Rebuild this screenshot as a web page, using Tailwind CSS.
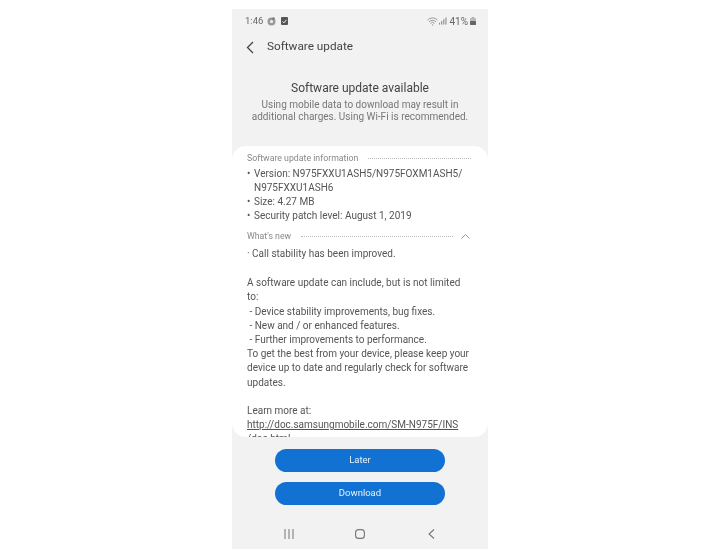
<!DOCTYPE html>
<html lang="en">
<head>
  <meta charset="UTF-8">
  <title>Software update</title>
  <script src="https://cdn.jsdelivr.net/npm/@tailwindcss/browser@4"></script>
</head>
<body class="bg-white font-['Roboto',sans-serif]">
  <div class="pl-[232px] pt-[9px] h-[555px] overflow-hidden">
    <div class="w-[256px] h-[540px] bg-[#f2f2f2] flex flex-col text-[#4a4a4a] blur-[0.4px]">
      <!-- status bar -->
      <div class="h-[24px] pl-[13px] pr-[12px] flex items-center justify-between text-[#666]">
        <div class="flex items-center gap-[4px]">
          <span class="text-[9.5px]">1:46</span>
          <svg width="9" height="9" viewBox="0 0 9 9"><circle cx="4.5" cy="4.5" r="4" fill="#999"/><circle cx="4.5" cy="4.5" r="1.6" fill="#eee"/><circle cx="6.5" cy="1.5" r="1.2" fill="#777"/></svg>
          <svg class="ml-[1px]" width="7" height="8" viewBox="0 0 7 8"><rect width="7" height="8" rx="1" fill="#555"/><path d="M1.5 4.5l1.5 1.3 2.5-3" stroke="#eee" fill="none"/></svg>
        </div>
        <div class="flex items-center gap-[1px]">
          <svg width="11" height="9" viewBox="0 0 11 9" fill="none" stroke="#999"><path d="M.5 3a7 7 0 0 1 10 0M2 4.8a5 5 0 0 1 7 0M3.6 6.4a2.5 2.5 0 0 1 3.8 0"/><circle cx="5.5" cy="8" r=".7" fill="#999" stroke="none"/></svg>
          <svg width="8" height="8" viewBox="0 0 9 8" fill="#888"><rect x="0" y="6" width="1.2" height="2"/><rect x="2.4" y="4" width="1.2" height="4"/><rect x="4.8" y="2" width="1.2" height="6"/><rect x="7.2" y="0" width="1.2" height="8"/></svg>
          <span class="ml-[1px] text-[10px]">41%</span>
          <svg class="ml-[1px]" width="6" height="8" viewBox="0 0 6 8"><rect x="1.7" y="0" width="2.6" height="1" fill="#aaa"/><rect x="0" y="1" width="6" height="7" rx=".8" fill="#bbb"/><rect x="0" y="4" width="6" height="4" rx=".8" fill="#666"/></svg>
        </div>
      </div>
      <!-- header -->
      <div class="h-[28px] flex items-center pl-[14px]">
        <svg width="8" height="13" viewBox="0 0 8 13" fill="none" stroke="#444" stroke-width="1.3"><path d="M7 1L1.5 6.5 7 12"/></svg>
        <h1 class="ml-[13px] text-[11.75px] text-[#444]">Software update</h1>
      </div>
      <!-- intro -->
      <div class="mt-[19px] text-center">
        <h2 class="text-[12px] leading-[16px] text-[#444]">Software update available</h2>
        <p class="mt-[3px] text-[10px] leading-[12px] text-[#777]">Using mobile data to download may result in<br>additional charges. Using Wi-Fi is recommended.</p>
      </div>
      <!-- card -->
      <div class="mt-[23px] h-[291px] bg-white rounded-[14px] overflow-hidden pl-[15px] pr-[17px] pt-[7px] text-[10px] leading-[14.2px] text-[#555]">
        <div class="flex items-center h-[11px] text-[8.75px] text-[#888]">
          <span>Software update information</span>
          <span class="ml-[10px] flex-1 border-t border-dotted border-[#bbb]"></span>
        </div>
        <ul class="mt-[3px] leading-[14px]">
          <li class="flex"><span class="w-[7px] shrink-0">•</span><span>Version: N975FXXU1ASH5/N975FOXM1ASH5/<br>N975FXXU1ASH6</span></li>
          <li class="flex"><span class="w-[7px] shrink-0">•</span><span>Size: 4.27 MB</span></li>
          <li class="flex"><span class="w-[7px] shrink-0">•</span><span>Security patch level: August 1, 2019</span></li>
        </ul>
        <div class="mt-[8px] flex items-center h-[11px] text-[8.75px] text-[#888]">
          <span>What's new</span>
          <span class="ml-[10px] flex-1 border-t border-dotted border-[#bbb]"></span>
          <svg class="ml-[8px] mr-[1px]" width="9" height="5" viewBox="0 0 9 5" fill="none" stroke="#999"><path d="M.5 4.5l4-4 4 4"/></svg>
        </div>
        <div class="mt-[5px] whitespace-nowrap">
          <p>· Call stability has been improved.</p>
          <p class="mt-[15px]">A software update can include, but is not limited<br>to:</p>
          <p>&nbsp;- Device stability improvements, bug fixes.</p>
          <p>&nbsp;- New and / or enhanced features.</p>
          <p>&nbsp;- Further improvements to performance.</p>
          <p>To get the best from your device, please keep your<br>device up to date and regularly check for software<br>updates.</p>
          <p class="mt-[14.2px]">Learn more at:</p>
          <p class="underline">http://doc.samsungmobile.com/SM-N975F/INS<br>/doc.html</p>
        </div>
      </div>
      <!-- buttons -->
      <div class="mt-[12px] flex flex-col items-center gap-[10px]">
        <button class="w-[170px] h-[23px] rounded-full bg-[#1272d3] text-[#e8f2fb] text-[9.5px]">Later</button>
        <button class="w-[170px] h-[23px] rounded-full bg-[#1272d3] text-[#e8f2fb] text-[9.5px]">Download</button>
      </div>
      <!-- nav -->
      <div class="mt-[24px] grid grid-cols-3 items-center justify-items-center w-[214px] mx-auto">
        <svg width="10" height="10" viewBox="0 0 10 10" stroke="#777"><path d="M1 0v10M5 0v10M9 0v10"/></svg>
        <svg width="10" height="10" viewBox="0 0 10 10" fill="none" stroke="#777" stroke-width="1.1"><rect x=".6" y=".6" width="8.8" height="8.8" rx="3"/></svg>
        <svg width="7" height="10" viewBox="0 0 7 10" fill="none" stroke="#777" stroke-width="1.1"><path d="M6 .5L1 5l5 4.5"/></svg>
      </div>
    </div>
  </div>
</body>
</html>
